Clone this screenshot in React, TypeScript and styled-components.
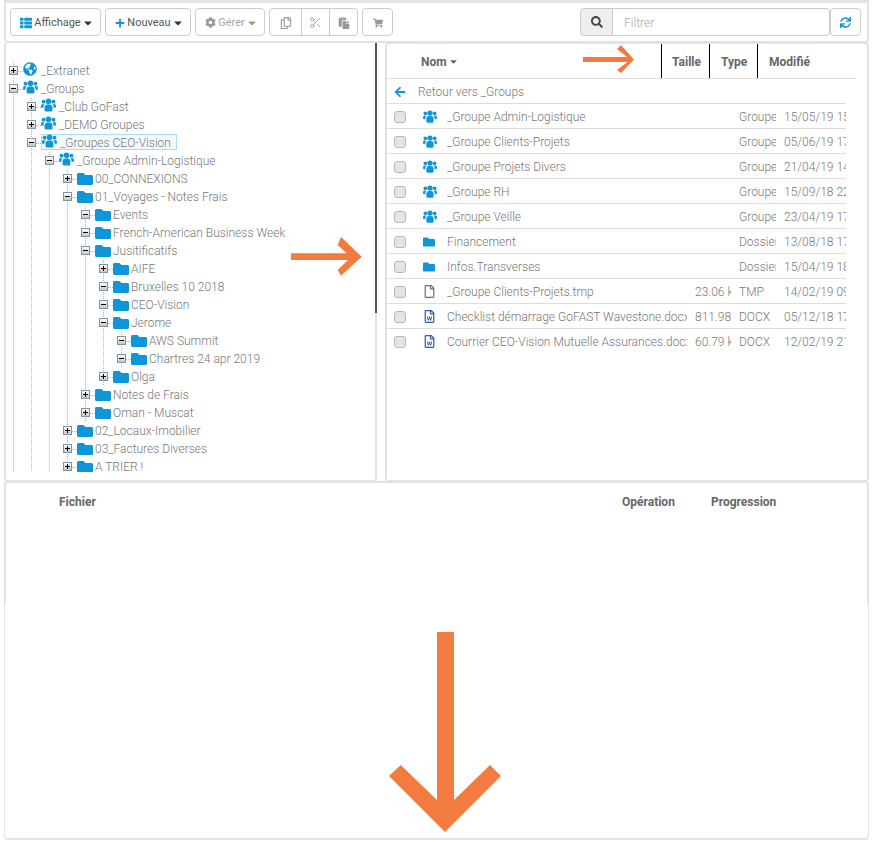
import React from "react";
import styled, { createGlobalStyle } from "styled-components";
import {
  FaThList, FaPlus, FaCog, FaRegCopy, FaPaste, FaShoppingCart, FaSearch, FaSync,
  FaFolder, FaGlobeAmericas, FaArrowLeft, FaRegFile, FaRegFileWord, FaCaretDown,
} from "react-icons/fa";
import { Scissors } from "lucide-react";

const Global = createGlobalStyle`
  html, body { margin: 0; padding: 0; background: #fff; }
  body { font-family: Roboto, "Liberation Sans", sans-serif; font-size: 12px; font-weight: 300; color: #787878; }
  * { box-sizing: border-box; }
`;

const Page = styled.div`
  position: relative;
  width: 873px;
  height: 842px;
  overflow: hidden;
  padding: 0 3px 0 4px;
  display: flex;
  flex-direction: column;
`;
const panel = `
  border: 2px solid #e2e2e2;
  border-radius: 4px;
  background: #fff;
`;
const Toolbar = styled.div`
  ${panel}
  border-top-width: 3px;
  border-top-left-radius: 0;
  border-top-right-radius: 0;
  height: 43px;
  width: 865px;
  display: flex;
  align-items: center;
  padding: 0 4px;
  gap: 4px;
`;
const Btn = styled.button<{ $w: number; $dim?: boolean }>`
  width: ${(p) => p.$w}px;
  height: 28px;
  background: #fff;
  border: 1px solid #ccc;
  border-radius: 4px;
  display: inline-flex;
  align-items: center;
  justify-content: center;
  gap: 2px;
  padding: 1px 0 0;
  font: 400 11px Roboto, sans-serif;
  color: ${(p) => (p.$dim ? "#a6a6a6" : "#555")};
  svg { flex: none; }
`;
const Caret = styled(FaCaretDown)`
  margin: 0 -3px 0 -1px;
`;
const Refresh = styled(Btn)`
  margin-right: 2px;
`;
const Group = styled.div`
  display: flex;
  button + button { margin-left: -1px; }
  button:not(:last-child) { border-top-right-radius: 0; border-bottom-right-radius: 0; }
  button:not(:first-child) { border-top-left-radius: 0; border-bottom-left-radius: 0; }
`;
const Spacer = styled.div`flex: 1;`;
const Search = styled.div`
  display: flex;
  height: 28px;
  margin-right: -4px;
`;
const SearchAddon = styled.div`
  width: 33px;
  background: #eee;
  border: 1px solid #ccc;
  border-radius: 4px 0 0 4px;
  display: flex;
  align-items: center;
  justify-content: center;
  color: #444;
`;
const SearchInput = styled.div`
  width: 217px;
  border: 1px solid #ccc;
  border-left: 0;
  border-radius: 0 4px 4px 0;
  padding: 1px 0 0 11px;
  display: flex;
  align-items: center;
  color: #a8a8a8;
  font-size: 12px;
`;
const Columns = styled.div`
  display: flex;
  height: 439px;
  width: 865px;
`;
const TreePanel = styled.div`
  ${panel}
  border-top: 0;
  border-right: 0;
  border-radius: 0 0 0 4px;
  width: 373px;
  height: 439px;
  display: flex;
`;
const TreeBody = styled.div`
  flex: 1;
  height: 429px;
  padding-top: 19px;
  overflow: hidden;
`;
const ScrollTrack = styled.div`
  width: 2px;
  background: #e2e2e2;
`;
const ScrollThumb = styled.div`
  height: 270px;
  background: #555;
`;
const Gutter = styled.div`
  width: 8px;
`;
const TreeRow = styled.div`
  display: flex;
  height: 18px;
  padding-left: 3px;
  line-height: 18px;
  white-space: nowrap;
`;
const Guide = styled.span`
  flex: none;
  width: 18px;
  background: repeating-linear-gradient(to bottom, #b4b4b4 0 1px, transparent 1px 2px) 4px 0 / 1px 100% no-repeat;
`;
const Expander = styled.span`
  flex: none;
  width: 14px;
  height: 18px;
  padding-top: 4px;
  background:
    repeating-linear-gradient(to right, #b4b4b4 0 1px, transparent 1px 2px) 9px 9px / 5px 1px no-repeat,
    repeating-linear-gradient(to bottom, #b4b4b4 0 1px, transparent 1px 2px) 4px 0 / 1px 100% no-repeat;
  svg { display: block; }
`;
const NodeIcon = styled.span<{ $top: number }>`
  flex: none;
  width: 18px;
  height: 18px;
  color: #0f96d8;
  padding-top: ${(p) => p.$top}px;
  svg { display: block; }
`;
const NodeTitle = styled.span`
  display: inline-block;
  height: 18px;
  line-height: 18px;
`;
const SelWrap = styled.span`
  display: flex;
  height: 16px;
  background: #f3fbfe;
  border: 1px solid #a9dcee;
  padding-right: 5px;
  > span { margin-top: -1px; }
`;
const ListPanel = styled.div`
  ${panel}
  flex: 1;
  height: 440px;
  margin-top: -1px;
`;
const ListHead = styled.div`
  display: flex;
  height: 35px;
  width: 469px;
  border-bottom: 1px solid #ddd;
  color: #666;
  font-weight: 700;
  align-items: stretch;
`;
const HeadCell = styled.div<{ $w: number; $pad: number; $line?: boolean }>`
  width: ${(p) => p.$w}px;
  padding: 1px 0 0 ${(p) => p.$pad}px;
  display: flex;
  align-items: center;
  gap: 1px;
  ${(p) => (p.$line ? "border-left: 1px solid #000;" : "")}
`;
const Back = styled.div`
  display: flex;
  align-items: center;
  height: 25px;
  width: 459px;
  padding: 2px 0 0 7px;
  gap: 12px;
  border-bottom: 1px solid #ddd;
  svg { color: #0f96d8; }
`;
const FileRow = styled.div<{ $last?: boolean }>`
  display: grid;
  grid-template-columns: 28px 16px 240px 36px 37px 62px;
  column-gap: 8px;
  height: 25px;
  width: 459px;
  padding-top: 2px;
  align-items: center;
  border-bottom: 1px solid ${(p) => (p.$last ? "transparent" : "#ddd")};
  white-space: nowrap;
`;
const Check = styled.span`
  display: block;
  width: 12px;
  height: 12px;
  margin: -1px 0 0 7px;
  background: #e4e4e4;
  border: 1px solid #b8b8b8;
  border-radius: 3px;
`;
const Cell = styled.div`
  overflow: hidden;
  line-height: 22px;
`;
const FileIcon = styled.div<{ $c: string }>`
  color: ${(p) => p.$c};
  display: flex;
  align-items: center;
  margin-top: -1px;
`;
const Transfers = styled.div`
  ${panel}
  margin-top: -1px;
  width: 865px;
  height: 122px;
  border-bottom: 0;
  border-radius: 4px 4px 0 0;
  display: flex;
  padding: 12px 0 0 53px;
  color: #666;
  font-weight: 700;
`;
const TransferCol = styled.span<{ $w: number }>`
  display: block;
  width: ${(p) => p.$w}px;
`;
const Dropzone = styled.div`
  ${panel}
  border-top: 0;
  border-left-width: 1px;
  border-right-width: 1px;
  border-radius: 0 0 4px 4px;
  width: 865px;
  height: 237px;
`;
const Arrow = styled.svg<{ $x: number; $y: number }>`
  position: absolute;
  display: block;
  left: ${(p) => p.$x}px;
  top: ${(p) => p.$y}px;
`;

const PM = ({ open }: { open: boolean }) => (
  <svg width="9" height="9" viewBox="0 0 9 9">
    <defs>
      <linearGradient id="pmg" x1="0" y1="0" x2="0" y2="1">
        <stop offset="0" stopColor="#fff" />
        <stop offset="1" stopColor="#c4c4c0" />
      </linearGradient>
    </defs>
    <rect x="0.5" y="0.5" width="8" height="8" fill="url(#pmg)" stroke="#7f93a8" />
    <rect x="2" y="4" width="5" height="1" fill="#000" />
    {!open && <rect x="4" y="2" width="1" height="5" fill="#000" />}
  </svg>
);

const Users = ({ w, h }: { w: number; h: number }) => (
  <svg width={w} height={h} viewBox="0 0 16 14" fill="currentColor">
    <circle cx="8" cy="3.100" r="3" />
    <circle cx="2.700" cy="3.400" r="2.100" />
    <circle cx="13.300" cy="3.400" r="2.100" />
    <path d="M3.800 12.500V9.300a3 3 0 0 1 3-2.800h2.400a3 3 0 0 1 3 2.800v3.200a1.500 1.500 0 0 1-1.500 1.500H5.300a1.500 1.500 0 0 1-1.500-1.500z" />
    <path d="M0 8.200C0 6.600.8 5.900 2 5.900c.7 0 1.200.3 1.700.6-.8.700-1.100 1.700-1.100 3.500H1C.4 10 0 9.400 0 8.200z" />
    <path d="M16 8.200c0-1.600-.8-2.300-2-2.300-.7 0-1.200.3-1.700.6.800.7 1.100 1.700 1.100 3.500H15c.6 0 1-.6 1-1.800z" />
  </svg>
);

type Kind = "u" | "f" | "g";
const tree: [number, Kind, string, boolean, boolean?][] = [
  [0, "g", "_Extranet", false],
  [0, "u", "_Groups", true],
  [1, "u", "_Club GoFast", false],
  [1, "u", "_DEMO Groupes", false],
  [1, "u", "_Groupes CEO-Vision", true, true],
  [2, "u", "_Groupe Admin-Logistique", true],
  [3, "f", "00_CONNEXIONS", false],
  [3, "f", "01_Voyages - Notes Frais", true],
  [4, "f", "Events", true],
  [4, "f", "French-American Business Week", true],
  [4, "f", "Jusitificatifs", true],
  [5, "f", "AIFE", false],
  [5, "f", "Bruxelles 10 2018", true],
  [5, "f", "CEO-Vision", true],
  [5, "f", "Jerome", true],
  [6, "f", "AWS Summit", true],
  [6, "f", "Chartres 24 apr 2019", true],
  [5, "f", "Olga", false],
  [4, "f", "Notes de Frais", false],
  [4, "f", "Oman - Muscat", false],
  [3, "f", "02_Locaux-Imobilier", false],
  [3, "f", "03_Factures Diverses", false],
  [3, "f", "A TRIER !", false],
];

const files: [string, string, string, string, string][] = [
  ["u", "_Groupe Admin-Logistique", "", "Groupe", "15/05/19 15:32"],
  ["u", "_Groupe Clients-Projets", "", "Groupe", "05/06/19 17:12"],
  ["u", "_Groupe Projets Divers", "", "Groupe", "21/04/19 14:20"],
  ["u", "_Groupe RH", "", "Groupe", "15/09/18 22:05"],
  ["u", "_Groupe Veille", "", "Groupe", "23/04/19 17:41"],
  ["f", "Financement", "", "Dossier", "13/08/18 17:10"],
  ["f", "Infos.Transverses", "", "Dossier", "15/04/19 18:02"],
  ["t", "_Groupe Clients-Projets.tmp", "23.06 ko", "TMP", "14/02/19 09:15"],
  ["w", "Checklist démarrage GoFAST Wavestone.docx", "811.98 ko", "DOCX", "05/12/18 17:33"],
  ["w", "Courrier CEO-Vision Mutuelle Assurances.docx", "60.79 ko", "DOCX", "12/02/19 21:07"],
];

const ORANGE = "#f47b3f";

const Node = ({ k, title }: { k: Kind; title: string }) => (
  <>
    <NodeIcon $top={k === "f" ? 1 : 0}>
      {k === "u" ? <Users w={15} h={14} /> : k === "g" ? <FaGlobeAmericas size={14} /> : <FaFolder size={16} />}
    </NodeIcon>
    <NodeTitle>{title}</NodeTitle>
  </>
);

export default function App() {
  return (
    <Page>
      <Global />
      <Toolbar>
        <Btn $w={91}><FaThList size={12} color="#0f96d8" />Affichage<Caret size={12} color="#333" /></Btn>
        <Btn $w={86}><FaPlus size={10} color="#0f96d8" />Nouveau<Caret size={12} color="#333" /></Btn>
        <Btn $w={70} $dim><FaCog size={11} color="#999" />Gérer<Caret size={12} color="#999" /></Btn>
        <Group>
          <Btn $w={33} $dim><FaRegCopy size={12} color="#999" /></Btn>
          <Btn $w={29} $dim><Scissors size={13} color="#999" strokeWidth={1.5} /></Btn>
          <Btn $w={29} $dim><FaPaste size={12} color="#999" /></Btn>
        </Group>
        <Btn $w={31} $dim><FaShoppingCart size={10} color="#999" /></Btn>
        <Spacer />
        <Search>
          <SearchAddon><FaSearch size={12} /></SearchAddon>
          <SearchInput>Filtrer</SearchInput>
        </Search>
        <Refresh $w={31}><FaSync size={11} color="#0f96d8" /></Refresh>
      </Toolbar>
      <Columns>
        <TreePanel>
          <TreeBody>
            {tree.map(([lvl, k, title, open, sel]) => (
              <TreeRow key={title + lvl}>
                {Array.from({ length: lvl }).map((_, i) => <Guide key={i} />)}
                <Expander><PM open={open} /></Expander>
                {sel ? <SelWrap><Node k={k} title={title} /></SelWrap> : <Node k={k} title={title} />}
              </TreeRow>
            ))}
          </TreeBody>
          <ScrollTrack><ScrollThumb /></ScrollTrack>
        </TreePanel>
        <Gutter />
        <ListPanel>
          <ListHead>
            <HeadCell $w={274} $pad={34}>Nom<FaCaretDown size={11} /></HeadCell>
            <HeadCell $w={48} $pad={10} $line>Taille</HeadCell>
            <HeadCell $w={48} $pad={11} $line>Type</HeadCell>
            <HeadCell $w={99} $pad={11} $line>Modifié</HeadCell>
          </ListHead>
          <Back><FaArrowLeft size={12} />Retour vers _Groups</Back>
          {files.map(([k, name, size, type, date], i) => (
            <FileRow key={name} $last={i === files.length - 1}>
              <Check />
              <FileIcon $c={k === "t" ? "#7a6a72" : k === "w" ? "#2f5fa8" : "#0f96d8"}>
                {k === "u" && <Users w={14} h={13} />}
                {k === "f" && <FaFolder size={12} />}
                {k === "t" && <FaRegFile size={13} />}
                {k === "w" && <FaRegFileWord size={13} />}
              </FileIcon>
              <Cell>{name}</Cell>
              <Cell>{size}</Cell>
              <Cell>{type}</Cell>
              <Cell>{date}</Cell>
            </FileRow>
          ))}
        </ListPanel>
      </Columns>
      <Transfers>
        <TransferCol $w={563}>Fichier</TransferCol>
        <TransferCol $w={89}>Opération</TransferCol>
        <TransferCol $w={90}>Progression</TransferCol>
      </Transfers>
      <Dropzone />
      <Arrow $x={580} $y={44} width="56" height="32" viewBox="0 0 56 32">
        <path d="M3 13H47L37 5l4-4L54 15.500 41 29l-4-3 10.500-8H3z" fill={ORANGE} />
      </Arrow>
      <Arrow $x={290} $y={236} width="74" height="42" viewBox="0 0 74 42">
        <path d="M1 17.300H56.400L47.700 9 51 1 71.700 20.700 51 39.700 47.700 34 58 24H1z" fill={ORANGE} />
      </Arrow>
      <Arrow $x={388} $y={632} width="114" height="202" viewBox="0 0 114 202">
        <path d="M49 0H66V168L102 133 113 144 57 200 1 144 12.700 133 49 168z" fill={ORANGE} />
      </Arrow>
    </Page>
  );
}
